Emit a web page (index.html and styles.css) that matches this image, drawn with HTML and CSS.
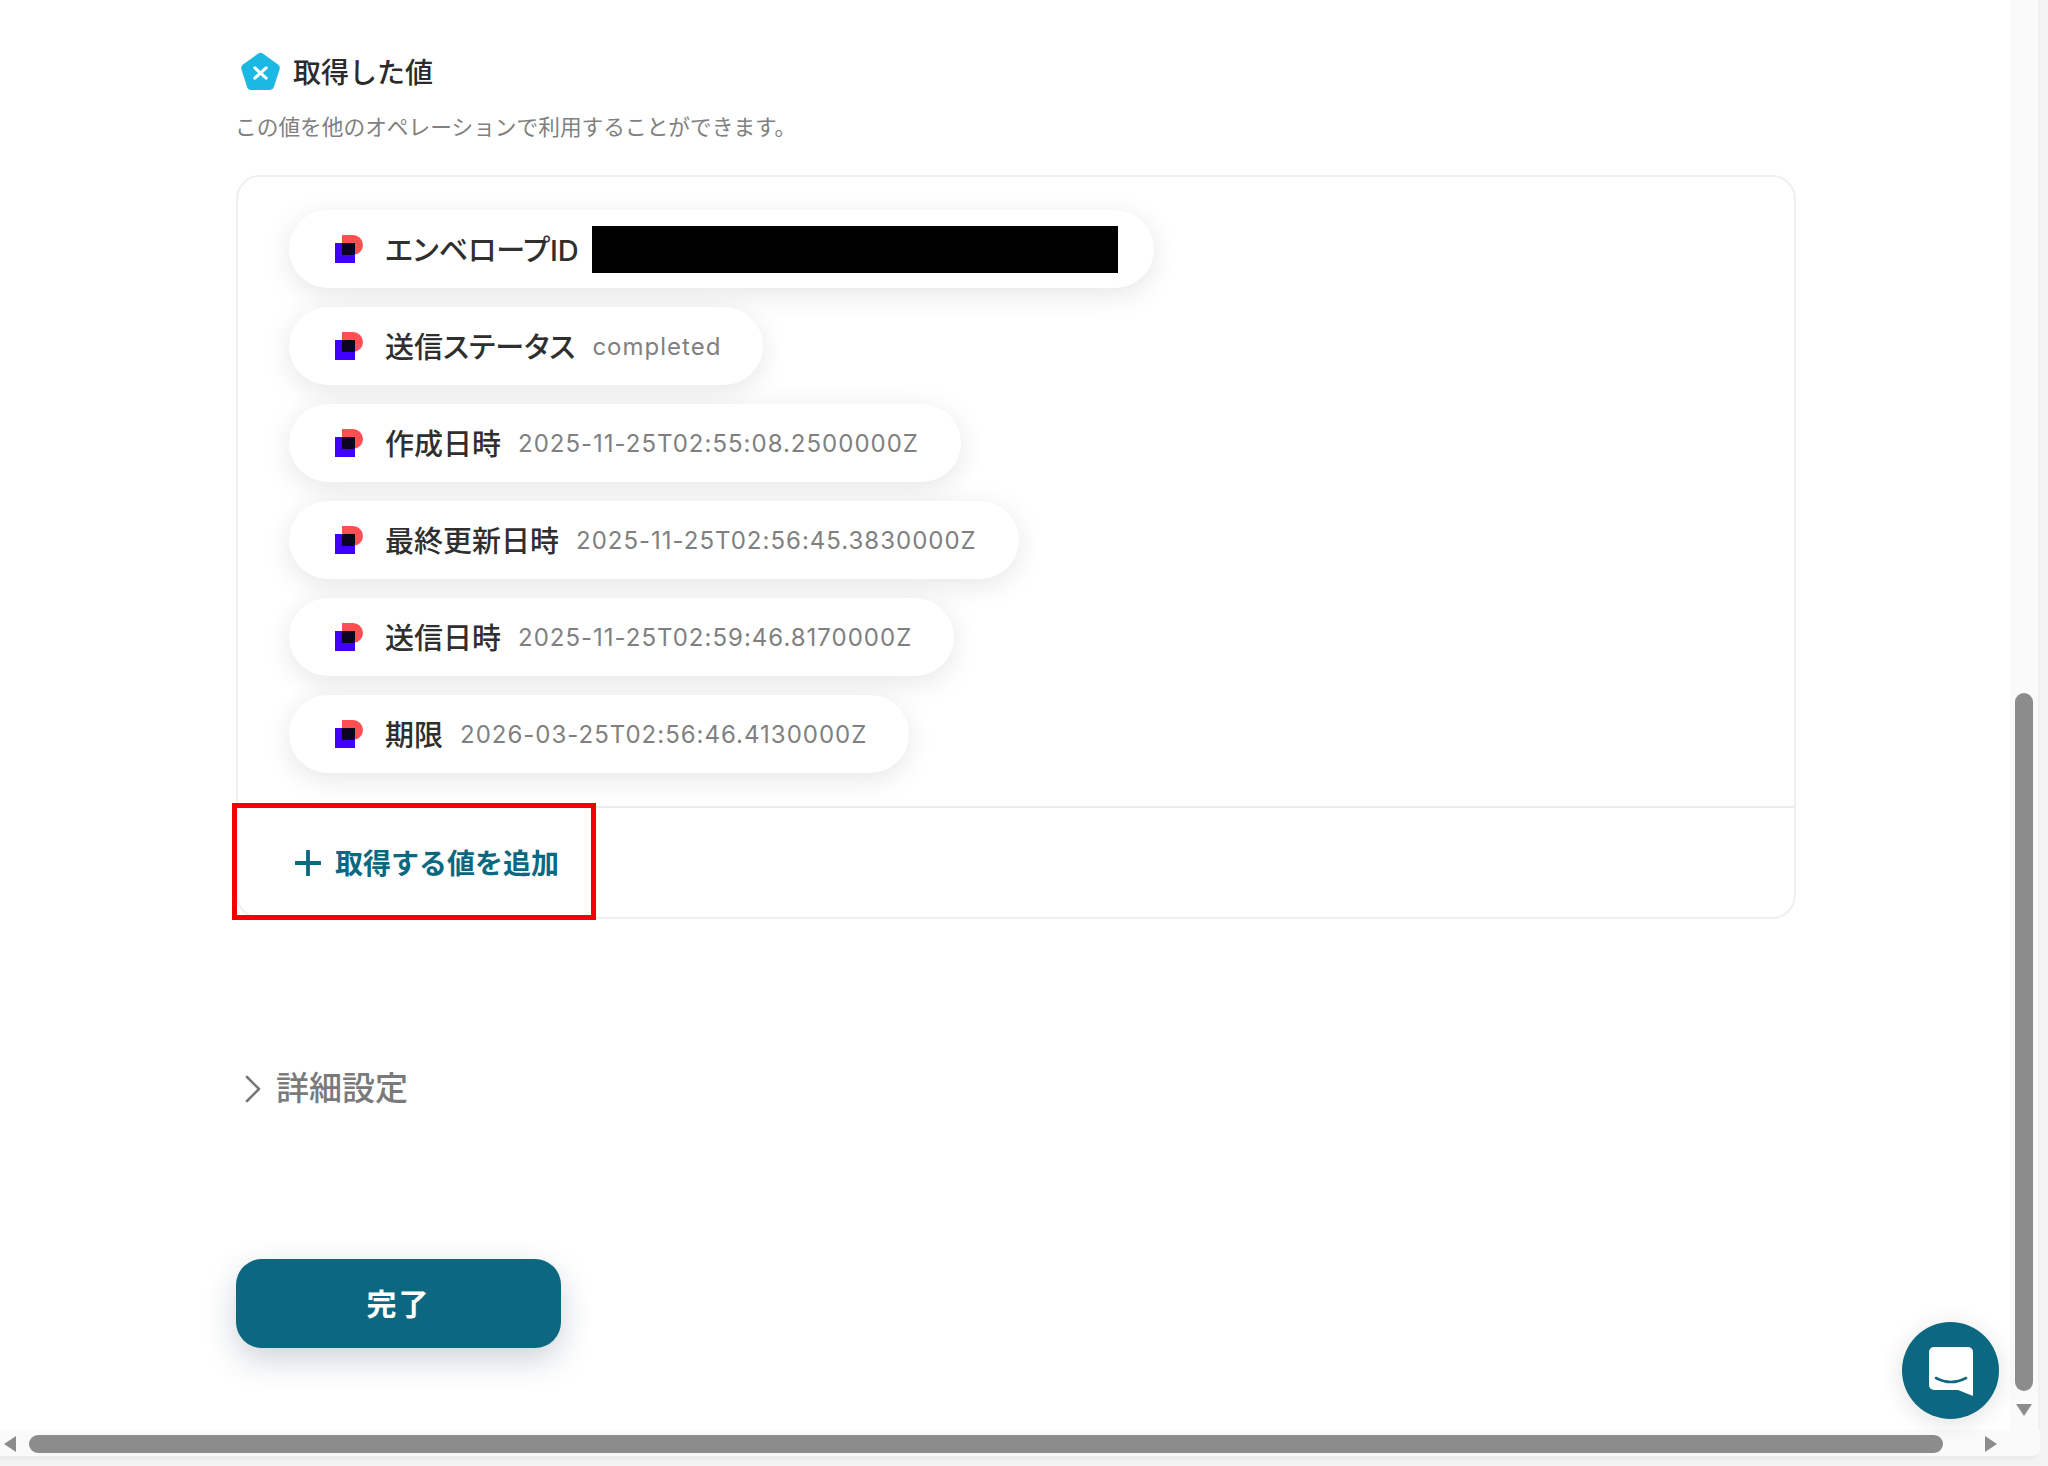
FILE: index.html
```html
<!DOCTYPE html>
<html lang="ja">
<head>
    <meta charset="UTF-8">
    <title>取得した値</title>
    <link rel="stylesheet" href="styles.css">
</head>
<body>
    <div class="window">
        <div class="viewport">
            <main class="content">
                <div class="section-title">
                    <svg class="title-icon" viewBox="0 0 40 38">
                        <path d="M17.5 1.2a4 4 0 0 1 5 0l14.6 10.6a4 4 0 0 1 1.5 4.5l-5.6 17.5a4 4 0 0 1-3.8 2.7H10.8a4 4 0 0 1-3.8-2.7L1.4 16.3a4 4 0 0 1 1.5-4.5z" fill="#1cb8e4"/>
                        <path d="M14.5 15l11 10M25.5 15l-11 10" stroke="#fff" stroke-width="3" stroke-linecap="round"/>
                    </svg>
                    <h2>取得した値</h2>
                </div>
                <p class="section-note">この値を他のオペレーションで利用することができます。</p>

                <section class="values-panel">
                    <div class="value-list">
                        <div class="value-pill">
                            <svg class="app-icon"><use href="#docusign"/></svg>
                            <span class="value-label">エンベロープID</span>
                            <span class="redacted"></span>
                        </div>
                        <div class="value-pill">
                            <svg class="app-icon"><use href="#docusign"/></svg>
                            <span class="value-label">送信ステータス</span>
                            <span class="value-text">completed</span>
                        </div>
                        <div class="value-pill">
                            <svg class="app-icon"><use href="#docusign"/></svg>
                            <span class="value-label">作成日時</span>
                            <span class="value-text">2025-11-25T02:55:08.2500000Z</span>
                        </div>
                        <div class="value-pill">
                            <svg class="app-icon"><use href="#docusign"/></svg>
                            <span class="value-label">最終更新日時</span>
                            <span class="value-text">2025-11-25T02:56:45.3830000Z</span>
                        </div>
                        <div class="value-pill">
                            <svg class="app-icon"><use href="#docusign"/></svg>
                            <span class="value-label">送信日時</span>
                            <span class="value-text">2025-11-25T02:59:46.8170000Z</span>
                        </div>
                        <div class="value-pill">
                            <svg class="app-icon"><use href="#docusign"/></svg>
                            <span class="value-label">期限</span>
                            <span class="value-text">2026-03-25T02:56:46.4130000Z</span>
                        </div>
                    </div>
                    <div class="add-row">
                        <svg class="plus-icon" viewBox="0 0 26 26">
                            <path d="M13 1v24M1 13h24" stroke="#0b6880" stroke-width="3.8" stroke-linecap="round"/>
                        </svg>
                        <span class="add-label">取得する値を追加</span>
                        <div class="highlight"></div>
                    </div>
                </section>

                <div class="details-toggle">
                    <svg class="chevron" viewBox="0 0 16 28">
                        <path d="M2 2l12 12L2 26" fill="none" stroke="#777" stroke-width="2.6" stroke-linecap="round" stroke-linejoin="round"/>
                    </svg>
                    <span>詳細設定</span>
                </div>

                <button class="btn-done">完了</button>
            </main>

            <div class="v-scroll">
                <div class="v-thumb"></div>
                <div class="arrow arrow-down"></div>
            </div>
        </div>

        <div class="h-scroll">
            <div class="arrow arrow-left"></div>
            <div class="h-thumb"></div>
            <div class="arrow arrow-right"></div>
        </div>

        <div class="chat-btn">
            <svg viewBox="0 0 44 50" width="44" height="50">
                <path d="M5 0h34a5 5 0 0 1 5 5v44l-15-6H5a5 5 0 0 1-5-5V5a5 5 0 0 1 5-5z" fill="#fff"/>
                <path d="M7 31q15 8 30 0" fill="none" stroke="#0b6880" stroke-width="2.6" stroke-linecap="round"/>
            </svg>
        </div>
    </div>

    <svg class="icon-defs" width="0" height="0">
        <symbol id="docusign" viewBox="0 0 28 28">
            <path d="M7 0h11a10 10 0 0 1 0 20H7z" fill="#ff4f52"/>
            <rect x="0" y="8" width="20" height="20" fill="#3f00ff"/>
            <path d="M7 8h13v10a2 2 0 0 1-2 2H7z" fill="#0a0420"/>
        </symbol>
    </svg>
</body>
</html>
```

FILE: styles.css
```css
* {
    margin: 0;
    padding: 0;
    box-sizing: border-box;
}

body {
    width: 2048px;
    height: 1466px;
    overflow: hidden;
    background: #f3f3f3;
    font-family: "Inter", "Noto Sans CJK JP", sans-serif;
    color: #333;
}

.window {
    position: relative;
    width: 2040px;
    height: 1460px;
    display: flex;
    flex-direction: column;
    background: #fff;
    border-radius: 0 0 10px 0;
}

.viewport {
    flex: 1;
    display: flex;
    min-height: 0;
}

.content {
    flex: 1;
    padding: 50px 0 0 236px;
}

.section-title {
    display: flex;
    align-items: center;
    gap: 12px;
    margin-left: 4px;
    height: 44px;
}

.title-icon {
    width: 41px;
    height: 40px;
}

.section-title h2 {
    font-size: 28px;
    font-weight: 500;
    color: #2b2b2b;
    margin-bottom: 3px;
}

.section-note {
    margin-top: 17px;
    font-size: 21.7px;
    line-height: 32px;
    margin-left: -1px;
    color: #808080;
}

.values-panel {
    width: 1560px;
    margin-top: 32px;
    border: 2px solid #f0f0f0;
    border-radius: 24px;
}

.value-list {
    display: flex;
    flex-direction: column;
    align-items: flex-start;
    gap: 19px;
    padding: 33px 0 33px 51px;
    border-bottom: 2px solid #ececec;
}

.value-pill {
    display: flex;
    align-items: center;
    height: 78px;
    padding: 0 42px 0 46px;
    background: #fff;
    border-radius: 39px;
    box-shadow: 0 6px 28px rgba(0, 0, 0, 0.1);
}

.app-icon {
    width: 28px;
    height: 28px;
    margin-right: 22px;
}

.value-label {
    font-size: 29px;
    font-weight: 500;
    font-feature-settings: "palt";
    color: #2f2f2f;
    margin-right: 17px;
    margin-bottom: 3px;
}

.value-text {
    font-size: 24px;
    letter-spacing: 1px;
    color: #808080;
}

.redacted {
    width: 526px;
    height: 47px;
    background: #000;
    margin-left: -4px;
}

.value-pill:first-child {
    padding-right: 36px;
}

.add-row {
    position: relative;
    display: flex;
    align-items: center;
    gap: 14px;
    height: 109px;
    padding-left: 57px;
    font-size: 28px;
    font-weight: 700;
    color: #0b6880;
}

.add-label {
    margin-bottom: 2px;
}

.plus-icon {
    width: 26px;
    height: 26px;
}

.highlight {
    position: absolute;
    left: -6px;
    top: -5px;
    width: 364px;
    height: 117px;
    border: 5px solid #f50000;
}

.details-toggle {
    display: flex;
    align-items: center;
    gap: 15px;
    margin: 142px 0 0 9px;
    height: 50px;
    font-size: 33px;
    font-weight: 500;
    color: #7a7a7a;
}

.chevron {
    width: 16px;
    height: 28px;
    margin-top: 6px;
}

.btn-done {
    display: block;
    width: 325px;
    height: 89px;
    margin-top: 148px;
    padding-bottom: 3px;
    border: none;
    border-radius: 26px;
    background: #0b6880;
    color: #fff;
    font-family: inherit;
    font-size: 30px;
    font-weight: 700;
    letter-spacing: 2px;
    box-shadow: 0 12px 32px rgba(30, 60, 80, 0.22);
}

.v-scroll {
    position: relative;
    width: 30px;
    background: #fafafa;
    border-right: 2px solid #f0f0f0;
    padding: 693px 0 0 5px;
}

.v-thumb {
    width: 18px;
    height: 698px;
    border-radius: 9px;
    background: #8c8c8c;
}

.h-scroll {
    display: flex;
    align-items: center;
    height: 30px;
    padding-top: 2px;
    padding-left: 4px;
    background: #fafafa;
    border-bottom: 4px solid #ececec;
    border-radius: 0 0 10px 0;
}

.h-thumb {
    width: 1914px;
    height: 18px;
    margin-left: 13px;
    border-radius: 9px;
    background: #8c8c8c;
}

.arrow {
    width: 0;
    height: 0;
    border-style: solid;
    border-color: transparent;
}

.arrow-left {
    border-width: 8px 12px 8px 0;
    border-right-color: #8c8c8c;
}

.arrow-right {
    margin-left: 42px;
    border-width: 8px 0 8px 12px;
    border-left-color: #8c8c8c;
}

.arrow-down {
    margin: 13px 0 0 1px;
    border-width: 12px 8px 0 8px;
    border-top-color: #8c8c8c;
}

.chat-btn {
    position: absolute;
    left: 1902px;
    top: 1322px;
    width: 97px;
    height: 97px;
    display: flex;
    align-items: center;
    justify-content: center;
    padding-top: 3px;
    border-radius: 50%;
    background: #0b6880;
    box-shadow: 0 4px 24px rgba(0, 0, 0, 0.12);
}

.icon-defs {
    position: absolute;
}
```
